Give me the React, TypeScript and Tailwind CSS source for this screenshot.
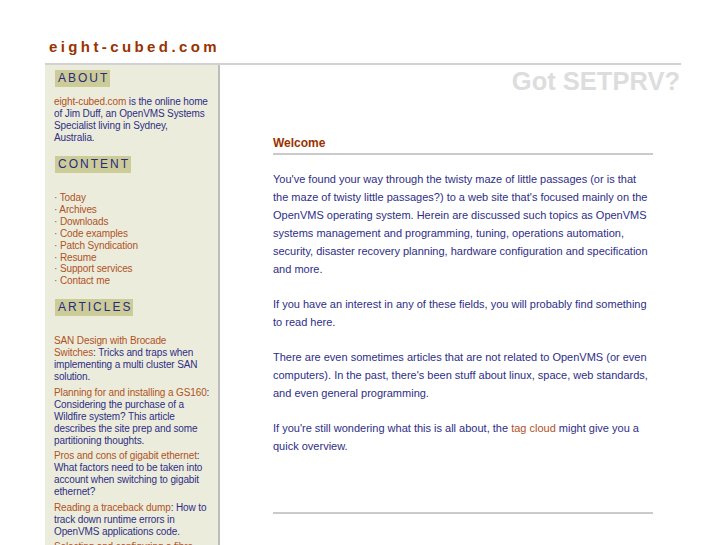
import React from 'react';

const navy = 'text-[#2e2e86]';

const contentLinks = [
  'Today',
  'Archives',
  'Downloads',
  'Code examples',
  'Patch Syndication',
  'Resume',
  'Support services',
  'Contact me',
];

const articles = [
  { title: 'SAN Design with Brocade Switches', text: 'Tricks and traps when implementing a multi cluster SAN solution.' },
  { title: 'Planning for and installing a GS160', text: 'Considering the purchase of a Wildfire system? This article describes the site prep and some partitioning thoughts.' },
  { title: 'Pros and cons of gigabit ethernet', text: 'What factors need to be taken into account when switching to gigabit ethernet?' },
  { title: 'Reading a traceback dump', text: 'How to track down runtime errors in OpenVMS applications code.' },
  { title: 'Selecting and configuring a fibre channel switch', text: 'Notes on the hardware and firmware involved.' },
];

const SideHeading: React.FC<{ label: string }> = ({ label }) => (
  <div className="flex">
    <h3 className="bg-[#cccc99] text-[#2a2a80] text-[12px] leading-[17px] tracking-[2px] pl-[3px] pr-[1px] font-normal">
      {label}
    </h3>
  </div>
);

const Link: React.FC<{ children: React.ReactNode }> = ({ children }) => (
  <a href="#" className="text-[#b0521f]">{children}</a>
);

export default function App() {
  return (
    <div className="min-h-screen bg-white font-['Liberation_Sans',Arial,sans-serif]">
      <div className="ml-[45px] w-[636px]">
        {/* site title */}
        <div className="h-[63px] pt-[38px] pl-[4px]">
          <h1 className="text-[15px] leading-[18px] font-bold tracking-[3.4px] text-[#993300]">eight-cubed.com</h1>
        </div>

        <div className="flex border-t-2 border-[#d2d2d2]">
          {/* sidebar */}
          <aside className={`w-[175px] shrink-0 bg-[#ececdc] border-r-2 border-[#bdbdbd] pl-[9px] pr-[8.5px] pt-[5px] text-[10px] leading-[12px] tracking-[-0.12px] ${navy}`}>
            <div className="pl-[1px]">
              <SideHeading label="ABOUT" />
            </div>
            <p className="mt-[9px]">
              <Link>eight-cubed.com</Link> is the online home of Jim Duff, an OpenVMS Systems Specialist living in Sydney, Australia.
            </p>

            <div className="mt-[12px] pl-[1px]">
              <SideHeading label="CONTENT" />
            </div>
            <ul className="mt-[19px] leading-[11.9px]">
              {contentLinks.map((l) => (
                <li key={l}>
                  <span className="text-[#666]">·</span> <Link>{l}</Link>
                </li>
              ))}
            </ul>

            <div className="mt-[12px] pl-[1px]">
              <SideHeading label="ARTICLES" />
            </div>
            <div className="mt-[19px] flex flex-col gap-[3.5px]">
              {articles.map((a) => (
                <p key={a.title}>
                  <Link>{a.title}</Link>: {a.text}
                </p>
              ))}
            </div>
          </aside>

          {/* main column */}
          <main className={`flex-1 pl-[53px] pr-[28px] text-[11px] leading-[18px] ${navy}`}>
            <div className="-mr-[27px] mt-[1px] text-right text-[25.5px] leading-[30px] font-bold text-[#dddddd]">
              Got SETPRV?
            </div>

            <h2 className="mt-[39px] text-[12px] leading-[16px] font-bold text-[#993300] pb-[2px] border-b-2 border-[#cacaca]">
              Welcome
            </h2>

            <div className="mt-[15px] flex flex-col gap-[17px]">
              <p>
                You've found your way through the twisty maze of little passages (or is that the maze of twisty little
                passages?) to a web site that's focused mainly on the OpenVMS operating system. Herein are discussed such
                topics as OpenVMS systems management and programming, tuning, operations automation, security, disaster
                recovery planning, hardware configuration and specification and more.
              </p>
              <p>If you have an interest in any of these fields, you will probably find something to read here.</p>
              <p>
                There are even sometimes articles that are not related to OpenVMS (or even computers). In the past,
                there's been stuff about linux, space, web standards, and even general programming.
              </p>
              <p>
                If you're still wondering what this is all about, the <Link>tag cloud</Link> might give you a quick overview.
              </p>
            </div>

            <div className="mt-[57px] border-t-2 border-[#cacaca]" />
          </main>
        </div>
      </div>
    </div>
  );
}
